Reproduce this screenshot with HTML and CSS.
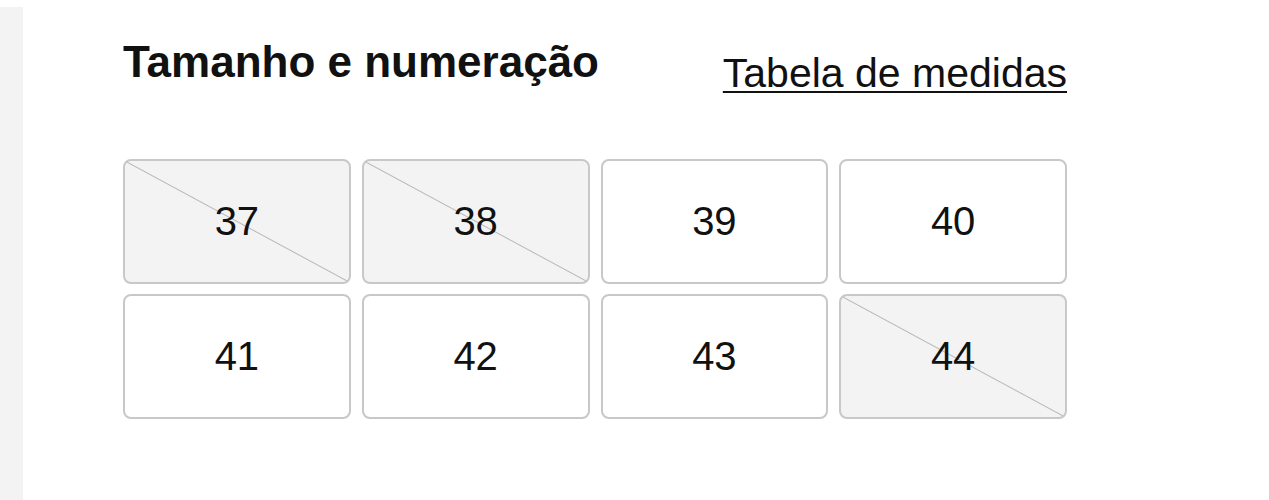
FILE: index.html
```html
<!DOCTYPE html>
<html lang="pt-BR">
<head>
  <meta charset="UTF-8">
  <title>Tamanho e numeração</title>
  <link rel="stylesheet" href="styles.css">
</head>
<body>
  <div class="page">
    <!-- side rail -->
    <aside class="rail"></aside>

    <main class="sizes">
      <div class="sizes-head">
        <h2>Tamanho e numeração</h2>
        <a href="#medidas">Tabela de medidas</a>
      </div>

      <div class="size-grid">
        <button class="size off">37</button>
        <button class="size off">38</button>
        <button class="size">39</button>
        <button class="size">40</button>
        <button class="size">41</button>
        <button class="size">42</button>
        <button class="size">43</button>
        <button class="size off">44</button>
      </div>
    </main>
  </div>
</body>
</html>
```

FILE: styles.css
```css
/* Global */
body {
  margin: 0;
  background: #ffffff;
  color: #111111;
  font-family: "Liberation Sans", Arial, sans-serif;
}
a {
  color: inherit;
}

.page {
  display: flex;
  height: 500px;
}
.rail {
  width: 23px;
  margin-top: 7px;
  background: #f3f3f3;
}

/* Sizes block */
.sizes {
  width: 944px;
  padding-left: 100px;
}
.sizes-head {
  display: flex;
  justify-content: space-between;
  align-items: flex-start;
  height: 159px;
}
.sizes-head h2 {
  margin: 37px 0 0;
  font-size: 44px;
  line-height: 50px;
  font-weight: 700;
}
.sizes-head a {
  margin-top: 50px;
  font-size: 41px;
  line-height: 46px;
  text-decoration-thickness: 2px;
  text-underline-offset: 4px;
}

.size-grid {
  display: grid;
  grid-template-columns: repeat(4, 1fr);
  grid-auto-rows: 125px;
  column-gap: 11px;
  row-gap: 10px;
}
.size {
  border: 2px solid #c8c8c8;
  border-radius: 8px;
  background: #ffffff;
  font-family: inherit;
  font-size: 40px;
  color: #111111;
  padding: 0;
}
.size.off {
  background: linear-gradient(to top right, #f3f3f3 calc(50% - 1px), #b8b8b8 50%, #f3f3f3 calc(50% + 1px));
}
```
